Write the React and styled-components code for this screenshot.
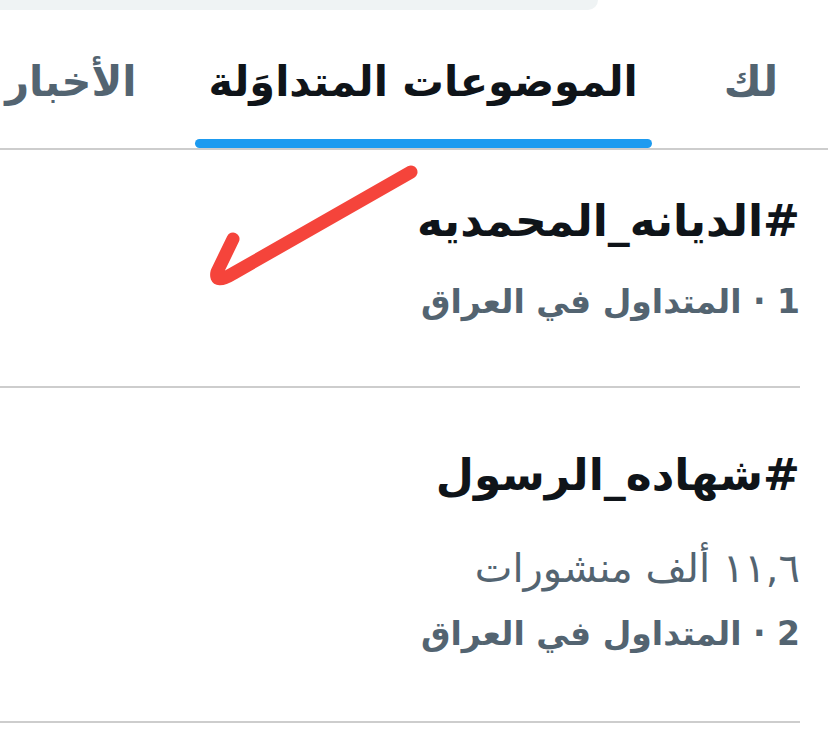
import styled, { createGlobalStyle } from 'styled-components'

const GlobalStyle = createGlobalStyle`
  html, body {
    margin: 0;
    padding: 0;
    background: #ffffff;
  }
  body {
    font-family: "DejaVu Sans", "Noto Sans", sans-serif;
  }
`

const Page = styled.div`
  position: relative;
  width: 828px;
  height: 742px;
  overflow: hidden;
  background: #ffffff;
`

const SearchEdge = styled.div`
  width: 598px;
  height: 10px;
  background: #eff3f4;
  border-bottom-right-radius: 30px;
`

const TabBar = styled.div`
  direction: rtl;
  display: flex;
  align-items: stretch;
  height: 138px;
  padding-right: 36px;
  border-bottom: 2px solid #cdcdcd;
`

const Tab = styled.div`
  position: relative;
  display: flex;
  align-items: center;
  padding: 4px 14px 0;
  margin-left: ${(p) => p.$gap}px;
  font-size: 41.5px;
  font-weight: 700;
  white-space: nowrap;
  color: ${(p) => (p.$active ? '#0f1419' : '#536471')};
`

const Indicator = styled.div`
  position: absolute;
  left: 0;
  right: 0;
  bottom: 0;
  height: 9px;
  border-radius: 5px;
  background: #1d9bf0;
`

const TrendList = styled.div`
  direction: rtl;
`

const Trend = styled.div`
  margin-right: 28px;
  padding: ${(p) => p.$pad};
  border-bottom: 2px solid #cdcdcd;
`

const Title = styled.div`
  font-size: 44px;
  font-weight: 700;
  line-height: 60px;
  color: #0f1419;
`

const Meta = styled.div`
  font-size: ${(p) => (p.$bold ? 33 : 40)}px;
  font-weight: ${(p) => (p.$bold ? 700 : 400)};
  line-height: 64px;
  margin-top: ${(p) => p.$top}px;
  color: #536471;
`

const Arrow = styled.svg`
  position: absolute;
  left: 0;
  top: 0;
  pointer-events: none;
`

export default function App() {
  return (
    <Page>
      <GlobalStyle />
      <SearchEdge />
      <TabBar>
        <Tab $gap={58}>لك</Tab>
        <Tab $active $gap={44}>
          الموضوعات المتداوَلة
          <Indicator />
        </Tab>
        <Tab $gap={0}>الأخبار</Tab>
      </TabBar>

      <TrendList>
        <Trend $pad="41px 0 52px">
          <Title>#الديانه_المحمديه</Title>
          <Meta $bold $top={19}>1 · المتداول في العراق</Meta>
        </Trend>
        <Trend $pad="57px 0 55px">
          <Title>#شهاده_الرسول</Title>
          <Meta $top={31}>١١,٦ ألف منشورات</Meta>
          <Meta $bold $top={2}>2 · المتداول في العراق</Meta>
        </Trend>
      </TrendList>

      <Arrow width="828" height="742" viewBox="0 0 828 742">
        <path
          d="M411 172 L234 273 Q214 285 217 272 L233 239"
          fill="none"
          stroke="#f5443b"
          strokeWidth="13"
          strokeLinecap="round"
          strokeLinejoin="round"
        />
      </Arrow>
    </Page>
  )
}
